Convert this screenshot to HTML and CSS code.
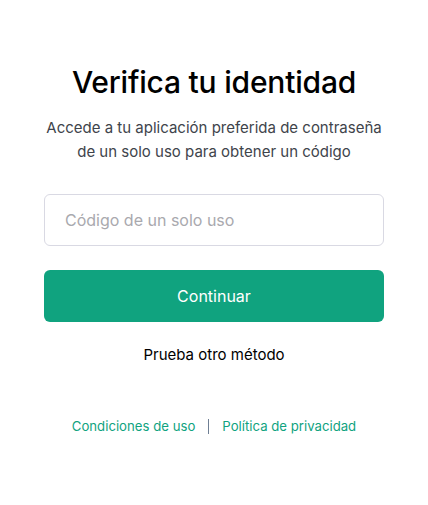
FILE: index.html
```html
<!DOCTYPE html>
<html lang="es">
<head>
<meta charset="utf-8">
<title>Verifica tu identidad</title>
<link rel="stylesheet" href="styles.css">
</head>
<body>
<main class="page">
  <section class="card">
    <h1 class="title">Verifica tu identidad</h1>
    <p class="subtitle">Accede a tu aplicación preferida de contraseña de un solo uso para obtener un código</p>
    <input class="field" type="text" placeholder="Código de un solo uso">
    <button class="primary" type="button">Continuar</button>
    <a class="alt" href="#">Prueba otro método</a>
  </section>
  <footer class="footer">
    <a class="link" href="#">Condiciones de uso</a>
    <span class="sep"></span>
    <a class="link" href="#">Política de privacidad</a>
  </footer>
</main>
</body>
</html>
```

FILE: styles.css
```css
html, body {
  margin: 0;
  padding: 0;
  background: #ffffff;
}
body {
  font-family: Inter, "Noto Sans", "Liberation Sans", sans-serif;
  color: #2d333a;
}
.page {
  display: flex;
  flex-direction: column;
  align-items: center;
  padding-top: 62px;
}
.card {
  width: 340px;
  display: flex;
  flex-direction: column;
  align-items: center;
}
.title {
  margin: 0;
  font-size: 30px;
  font-weight: 500;
  line-height: 40px;
  color: #000000;
  letter-spacing: -0.2px;
}
.subtitle {
  margin: 14px 0 0;
  font-size: 15px;
  line-height: 24px;
  text-align: center;
  color: #40444b;
  padding: 0 2px;
}
.field {
  box-sizing: border-box;
  margin-top: 30px;
  width: 340px;
  height: 52px;
  border: 1px solid #d9d9e3;
  border-radius: 6px;
  padding: 0 20px;
  font-family: inherit;
  font-size: 16px;
  color: #2d333a;
  outline: none;
}
.field::placeholder {
  color: #a9a9ae;
}
.primary {
  margin-top: 24px;
  width: 340px;
  height: 52px;
  border: none;
  border-radius: 6px;
  background: #10a37f;
  color: #ffffff;
  font-family: inherit;
  font-size: 16px;
  font-weight: 400;
}
.alt {
  margin-top: 23px;
  font-size: 15px;
  line-height: 20px;
  color: #000000;
  text-decoration: none;
}
.footer {
  margin-top: 51px;
  display: flex;
  align-items: center;
  gap: 13px;
}
.link {
  font-size: 13.2px;
  line-height: 20px;
  color: #10a37f;
  text-decoration: none;
}
.sep {
  width: 1px;
  height: 15px;
  background: #6f7f94;
}
```
